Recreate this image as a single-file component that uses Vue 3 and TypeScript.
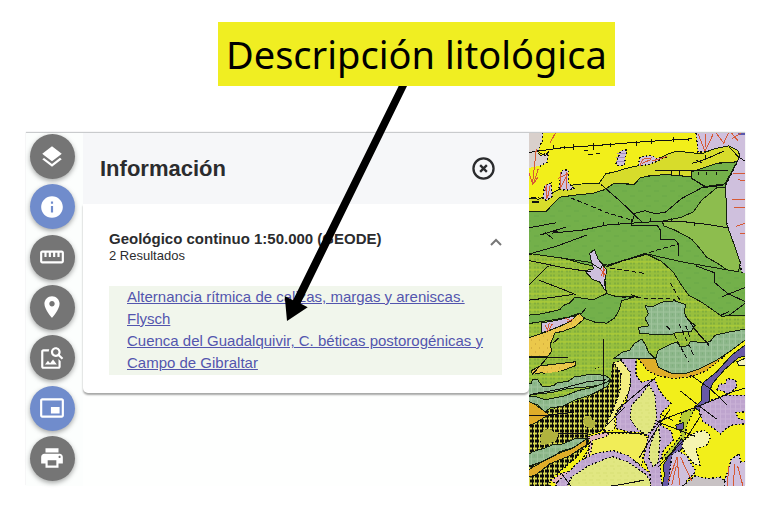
<script setup lang="ts">
import { ref } from 'vue'

interface Tool {
  id: string
  label: string
  path: string
}

const tools: Tool[] = [
  { id: 'layers', label: 'Capas', path: 'M11.99 18.54l-7.37-5.73L3 14.07l9 7 9-7-1.63-1.27-7.38 5.74zM12 16l7.36-5.73L21 9l-9-7-9 7 1.63 1.27L12 16z' },
  { id: 'info', label: 'Información', path: 'M12 2C6.48 2 2 6.48 2 12s4.48 10 10 10 10-4.48 10-10S17.52 2 12 2zm1 15h-2v-6h2v6zm0-8h-2V7h2v2z' },
  { id: 'measure', label: 'Medir', path: 'M21 6H3c-1.1 0-2 .9-2 2v8c0 1.1.9 2 2 2h18c1.1 0 2-.9 2-2V8c0-1.1-.9-2-2-2zm0 10H3V8h2v4h2V8h2v4h2V8h2v4h2V8h2v4h2V8h2v8z' },
  { id: 'place', label: 'Localizar', path: 'M12 2C8.13 2 5 5.13 5 9c0 5.25 7 13 7 13s7-7.75 7-13c0-3.87-3.13-7-7-7zm0 9.5c-1.38 0-2.5-1.12-2.5-2.5s1.12-2.5 2.5-2.5 2.5 1.12 2.5 2.5-1.12 2.5-2.5 2.5z' },
  { id: 'search', label: 'Buscar imagen', path: 'M18 13v7H4V6h5.02c.05-.71.22-1.38.48-2H4c-1.1 0-2 .9-2 2v14c0 1.1.9 2 2 2h14c1.1 0 2-.9 2-2v-5l-2-2zm-1.5 5h-11l2.75-3.53 1.96 2.36 2.75-3.54L16.5 18zm2.8-9.11c.44-.7.7-1.51.7-2.39C20 4.01 17.99 2 15.5 2S11 4.01 11 6.5s2.01 4.5 4.49 4.5c.88 0 1.7-.26 2.39-.7L21 13.42 22.42 12 19.3 8.89zM15.5 9C14.12 9 13 7.88 13 6.5S14.12 4 15.5 4 18 5.12 18 6.5 16.88 9 15.5 9z' },
  { id: 'overview', label: 'Vista general', path: 'M19 11h-8v6h8v-6zm4 8V4.98C23 3.88 22.1 3 21 3H3c-1.1 0-2 .88-2 1.98V19c0 1.1.9 2 2 2h18c1.1 0 2-.9 2-2zm-2 .02H3V4.97h18v14.05z' },
  { id: 'print', label: 'Imprimir', path: 'M19 8H5c-1.66 0-3 1.34-3 3v6h4v4h12v-4h4v-6c0-1.66-1.34-3-3-3zm-3 11H8v-5h8v5zm3-7c-.55 0-1-.45-1-1s.45-1 1-1 1 .45 1 1-.45 1-1 1zm-1-9H6v4h12V3z' },
]

const active = ref<string[]>(['info', 'overview'])
const panelOpen = ref(true)
const expanded = ref(true)

function toggle(id: string): void {
  active.value = active.value.includes(id)
    ? active.value.filter((item) => item !== id)
    : [...active.value, id]
  if (id === 'info') panelOpen.value = active.value.includes('info')
}

function closePanel(): void {
  panelOpen.value = false
  active.value = active.value.filter((item) => item !== 'info')
}

const results: string[] = [
  'Alternancia rítmica de calizas, margas y areniscas. Flysch',
  'Cuenca del Guadalquivir, C. béticas postorogénicas y Campo de Gibraltar',
]
</script>

<template>
  <div class="page">
    <p class="callout">Descripción litológica</p>

    <main class="viewer">
      <nav class="rail" aria-label="Herramientas">
        <button
          v-for="tool in tools"
          :key="tool.id"
          type="button"
          class="tool"
          :class="{ active: active.includes(tool.id) }"
          :aria-label="tool.label"
          :aria-pressed="active.includes(tool.id)"
          @click="toggle(tool.id)"
        >
          <svg viewBox="0 0 24 24" aria-hidden="true"><path :d="tool.path" /></svg>
        </button>
      </nav>

      <section class="panel">
        <template v-if="panelOpen">
          <header class="panel-head">
            <h1>Información</h1>
            <button type="button" class="icon-button" aria-label="Cerrar" @click="closePanel">
              <svg class="close-icon" viewBox="0 0 24 24" aria-hidden="true">
                <circle cx="12" cy="12" r="10.5" />
                <path d="M8.5 8.5l7 7M15.5 8.5l-7 7" />
              </svg>
            </button>
          </header>
          <div class="card">
            <div class="card-head">
              <div>
                <h2>Geológico continuo 1:50.000 (GEODE)</h2>
                <p class="count">2 Resultados</p>
              </div>
              <button
                type="button"
                class="icon-button chevron"
                aria-label="Contraer"
                :aria-expanded="expanded"
                @click="expanded = !expanded"
              >
                <svg viewBox="0 0 12 8" aria-hidden="true"><path d="M1 7l5-5 5 5" /></svg>
              </button>
            </div>
            <ul v-if="expanded" class="results">
              <li v-for="item in results" :key="item"><a href="#">{{ item }}</a></li>
            </ul>
          </div>
        </template>
      </section>

      <div class="map">
        <svg viewBox="0 0 648 1062" preserveAspectRatio="xMidYMid slice" role="img" aria-label="Mapa geológico">
          <defs>
            <pattern id="forest" width="48" height="30" patternUnits="userSpaceOnUse">
              <rect width="48" height="30" fill="#73b04a" />
              <path d="M4 8h14M28 23h14" stroke="#69a748" stroke-width="3" />
            </pattern>
            <pattern id="lime" width="24" height="24" patternUnits="userSpaceOnUse">
              <rect width="24" height="24" fill="#98bf3d" />
              <path d="M6 4v6M15 4v6M6 14v6M15 14v6" stroke="#82ae3c" stroke-width="5" />
              <path d="M0 1h24" stroke="#b4d034" stroke-width="3" />
            </pattern>
            <pattern id="sage" width="18" height="18" patternUnits="userSpaceOnUse">
              <rect width="18" height="18" fill="#8cb68a" />
              <path d="M0 2h18M2 0v18" stroke="#9fc49c" stroke-width="3" />
              <path d="M8 7h5v6h-5z" fill="#7faf7c" />
            </pattern>
            <pattern id="brick" width="15" height="15" patternUnits="userSpaceOnUse">
              <rect width="15" height="15" fill="#d8d850" />
              <path d="M0 3h12v8H0z" fill="#0b0b0b" />
              <path d="M6 0v15" stroke="#0b0b0b" stroke-width="3" />
            </pattern>
            <pattern id="mauve" width="15" height="15" patternUnits="userSpaceOnUse">
              <rect width="15" height="15" fill="#bea4ce" />
              <path d="M1 0v15M0 1h15" stroke="#c9b1d6" stroke-width="2" />
            </pattern>
            <pattern id="pale" width="21" height="21" patternUnits="userSpaceOnUse">
              <rect width="21" height="21" fill="#e1e782" />
              <path d="M3 3h12M12 13h6" stroke="#d6de73" stroke-width="3" />
            </pattern>
            <pattern id="gold" width="24" height="24" patternUnits="userSpaceOnUse">
              <rect width="24" height="24" fill="#ebc84b" />
              <path d="M5 7h3M17 18h3" stroke="#c29a35" stroke-width="3" />
            </pattern>
          </defs>

          <rect width="648" height="1062" fill="#f2ef1a" />

          <!-- Middle slopes -->
          <g transform="translate(-12 339)">
            <path fill="url(#forest)" d="M12-120H660V230H12z" />
            <path fill="url(#lime)" class="edge" d="M-5 22L60 28 130 42 185 58 250 62 310 40 365 26 410 48 445 80 470 120 492 150 530 170 590 212 670 208 V300L560 372 380 400 190 500H-5z" />
            <path fill="url(#forest)" class="edge" d="M0 210L50 205 80 198 105 192 115 180 135 172 150 155 205 163 245 144 270 152 330 154 290 166 282 195 268 218 245 233 210 230 180 219 160 204 130 215 90 222 0 236z" />
            <path class="edge lilac" d="M205 70l-5-30-5-15 14-12 12 30 14 18 10 12-6 35 2 28-16-26-22-8-24-26z" />
            <path fill="url(#gold)" class="edge" d="M0 280L50 264 95 246 130 220 165 204 178 220 150 244 112 258 90 262 76 296 80 318 68 333H0z" />
            <path class="edge lilac" d="M50 232l38-6 42-10 25-6-20 18-34 16-50 18z" />
            <path fill="url(#sage)" class="edge" d="M361 181L385 183 410 170 450 166 482 177 478 200 486 218 510 240 498 259 455 260 440 268 380 266 345 264 340 246 372 241 360 220 370 205z" />
            <path fill="url(#gold)" class="edge" d="M20 375l26-14 104-12v12l-42 16-40 12-16-8-30 6z" />
          </g>

          <!-- Southern basin -->
          <g transform="translate(-12 -12)">
            <path fill="#f2ef1a" d="M335 692L392 690 460 737 520 725 670 622V1090H370L330 900z" />
            <path fill="url(#brick)" class="dots" d="M0 850L60 850 120 830 200 790 205 722 265 705 288 725 285 790 270 840 235 905 190 920 192 945 150 990 75 1055V1090H0z" />
            <path fill="url(#lime)" d="M0 740L60 735 150 722 205 722 262 705 255 770 200 800 120 830 60 845 0 820z" />
            <path fill="url(#sage)" class="edge" d="M0 768L18 765 24 752 38 754 52 774 88 772 92 764 130 758 150 744 175 742 188 738 240 740 256 752 240 766 200 774 130 780 80 792 40 796 0 802z" />
            <path fill="url(#sage)" class="edge" d="M0 806L32 804 60 814 120 802 160 786 205 776 256 757 246 774 200 798 150 814 110 834 76 838 60 850 38 828 0 822z" />
            <path fill="#dfad29" class="edge" d="M0 812l30 16 42 30-42 26-30 12z" />
            <path fill="#b1b33e" d="M45 930l10-26 20-2 12 10 16-2-10 26-18 8-26 6zM174 880l6-16 15-4 7 14 14 8-14 18-20-6z" />
            <path fill="url(#sage)" class="edge" d="M0 985l24-16 34-10 30-12 18 2 48-20 30 2-30 24-48 14-34 24-72 24z" />
            <path fill="#dfad29" class="edge" d="M0 1030l55-32 47-24 40-14 42-28 2 16-52 34-60 24-40 32-34 12z" />
            <path fill="#f3ee80" class="dots" d="M265 702L300 695 318 740 312 790 290 830 270 860 268 905 235 908 262 850 285 790 288 735z" />
            <path fill="url(#mauve)" class="dots" d="M285 690L333 690 333 740 350 762 388 750 405 790 437 825 405 860 410 890 370 925 350 912 310 910 272 900 275 855 300 825 318 770 315 730z" />
            <path fill="url(#pale)" class="dots" d="M372 768L390 800 395 870 385 900 365 920 335 900 315 870 320 830 350 798z" />
            <path fill="#f1ed57" class="dots" d="M195 930L240 914 350 914 370 930 355 980 350 1010 310 990 260 970 200 985 160 1012 190 965z" />
            <path fill="#e4b5bd" class="dots" d="M78 1056l30-20 56-20 26-42 6-36-8-14 62-14-2 12-46 14-4 34-26 44-62 36-18 16z" />
            <path fill="url(#mauve)" class="dots" d="M98 1060L130 1030 160 1000 210 975 265 966 310 982 375 1035 385 1090H85z" />
            <path fill="url(#pale)" class="dots" d="M120 1090L140 1044 190 1012 260 984 310 1000 365 1040 378 1060 378 1090z" />
            <path fill="url(#mauve)" class="dots" d="M370 925L385 900 400 885 440 910 445 935 415 965 405 1000 412 1090 378 1090 375 1035 355 990z" />
            <path fill="url(#pale)" class="dots" d="M375 950L400 890 405 930 400 1000 385 1015 372 990z" />
            <path fill="#dfad29" class="dots" d="M340 690L365 724 395 740 440 750 500 745 545 726 600 682 520 722 460 735 392 690z" />
            <path fill="url(#sage)" class="edge" d="M268 689L292 671 314 665 328 645 350 632 362 649 370 671 392 691z" />
            <path fill="url(#sage)" class="edge" d="M392 690L400 665 440 645 456 642 465 654 490 652 496 638 530 642 555 640 570 620 610 611 670 600V628L610 672 570 698 520 722 480 736 440 735 400 716z" />
            <path fill="#b6cc35" class="dots" d="M510 840L470 852 462 895 470 920 440 955 408 992 440 985 480 930 485 890z" />
            <path fill="#6859a6" class="edge" d="M670 642L620 680 575 730 535 762 528 780 528 818 508 836 520 846 552 828 552 790 565 762 600 722 640 688 670 680zM452 890l24-8-2 20-18 2zM470 930L430 985 415 1010 418 1040 408 1090 430 1090 440 1000 478 950z" />
            <path fill="url(#mauve)" class="dots" d="M530 830L570 810 600 800 670 800V850L632 852 640 870 670 875V885L620 890 604 900 586 916 560 895 535 880 522 850zM575 784L582 768 600 765 608 750 632 756 636 775 610 797 592 788z" />
            <path fill="#f5f4b0" class="dots" d="M478 935L510 912 540 905 557 925 545 950 512 962 520 985 526 1010 508 1008 478 970 470 950z" />
            <path fill="#f4f3ba" class="edge" d="M636 700L670 685V712L640 710z" />
            <path class="lilac dots" d="M428 1090L440 980 460 967 484 982 510 1024 506 1038 484 1056 474 1090zM592 1090L600 1050 612 1020 618 992 642 976 648 1000 670 998V1090z" />
            <path fill="#c8c2c4" class="dots" d="M474 1072L510 1042 546 1050 586 1046 600 1058 594 1090H476z" />
          </g>
          <g transform="translate(-12 699)">
            <path class="line" d="M12 149h50M20 86l80-14 90-24 54-5M274 135L392 36M240 185l60-60M234 200h60l56 6M342 278l58-96 36-52M395 170l50-20 65-24 65-26 50-22 50-14M405 145l38 20M400 170l110 42M466 76l60 48 48 36M496 28l60 42 50 48M530 146l-42 66-48 50-40 42M110 325l30 40M256 362l50-8 50-10M62 150l84-10M100 203h90" />
            <path class="fault" d="M430 350l26-76 8 84M466 274l34 72M454 300l-14 60M606 362l6-60M624 362l6-65M638 302l16 60" />
          </g>
          <g transform="translate(-12 339)">
            <path class="line" d="M12 28l82-26M12 45l105 22 80 12M12 118l52-52 8-5M42 104l70 27 42 17M12 164l82-10 50-7M12 335h118M70 333l-48 54M240 105l4 39M235 280v150M250 58l110-30 95-40M318 148l30 9M500 240l52 60M480 210l48 65 25 22M460 8l14 27 44-7M510 28l5 34 54 20 1 30 38 32 52 24M590 154l70-28M520 0l28 36M586 210l26-12M668 168l-60 45M184 186l-16 20M85 292l18-16" />
            <path class="dash" d="M255 68l105 16M365 20l87-18M436 112l30 54M425 242l16 16M448 267l42 82M462 235l45 96M482 240l14 40M290 155l160 6" />
            <path class="fault" d="M65 260l8-27M70 257l-10-18M70 257l12-22M120 218l22 10M125 230l20-10M208 43l9 22M214 50l-8 10M225 70l16 18M228 90l12-20M234 65v30" />
          </g>

          <!-- Northern ridge -->
          <g transform="translate(-12 -12)">
            <path fill="#d9d0cc" class="dots" d="M0 0h54l-2 36-14 34 8 13 24-12-4 30-21 12-10 58-35 16z" />
            <path class="lilac dots" d="M512 0H675V432h-24l-8-30-12-28-14-40-11-48-6-110 37-77 5-24-28-20-40 10-55 7z" />
            <path fill="url(#forest)" class="edge" d="M0 249L60 250 80 230 104 206 150 200 205 194 237 184 265 164 300 166 326 169 346 148 370 143 420 138 500 145 540 130 570 106 636 100 600 173 606 290 630 375 606 424 470 400 360 375 250 410 120 390 0 373z" stroke="none" />
            <path fill="#d7dc2b" class="edge" d="M0 208L40 212 100 184 150 168 190 165 222 165 242 136 270 130 310 118 350 110 400 92 430 76 455 68 530 76 570 60 612 52 638 65 645 82 636 100 576 104 545 124 500 145 425 138 372 142 346 148 326 169 300 164 268 164 237 184 205 194 150 200 104 206 62 250H0z" />
            <path fill="#f2ef1a" d="M0 120l45-8 10 60-7 30-48 10z" />
            <path fill="#8dbd4e" class="edge" d="M412 278L470 266 505 250 530 215 575 178 602 178 606 290 628 350 646 402 640 430 606 424 580 406 545 386 523 358 500 332 452 306 416 292z" />
            <path fill="#75b14a" class="edge" d="M500 130l74-25 62-5-36 66-58 8-42-24z" />
            <path class="lilac dots" d="M54 210l4-38 20-8 4 40-18 12zM102 180l8-54 20-2 0 38 16 18-24 6zM273 105l14-38 18-3-7 46-18 2zM340 112l5-26 32-6 18 10 30-5-26 12-30 12z" />
            <path class="lilac edge" d="M200 405l-6-30 14-12 12 30 14 16-8 12z" />
            <path fill="#5b58ad" d="M636 12h30v8h-24z" />
            <path class="line" d="M12 72L110 58 240 49 350 40 500 31M42 72l20 10 8-14M190 65h-14M145 46v17M205 42v22M255 42v12M335 36v16M380 32v14M446 24v16M490 27v10M85 50v12M119 52v10M390 125h220M440 128v10M462 128v10M520 130v8M545 130v8M575 130v8M500 128v20l40 28M500 105l40-12 58-26M512 94l18 8M540 78v12M612 55l28 30 20 13M228 168l60 52 64 62M320 282l10-28 30-7 30 8 30-3 50-42 60-32 65-8M80 314L170 305 250 289 320 284 410 278 480 280 550 288 608 298M12 298l80-15M44 320l78-24M60 312l24 18M80 308l28 4M25 373l70-20 92-34M320 270v20h76l10 14v28h42l12 14v36M235 280v12M280 280v10M375 268v10M440 268v12M508 280v12M250 409l110-30" />
            <path class="dash" d="M137 208l110 45 75 22M372 372l40-12 50-14M18 206h24M190 78l40-4" />
            <path class="fault" d="M92 12L76 42M34 60L22 170M12 135l12 32 16-22M40 120l-14 45M60 175l8 32 8-38M63 210V165M105 180l25-48M108 175l-2-45M124 180V130M100 150l28-14M345 112l8-20 28-4M350 105l28-12M380 98l46-14M520 18l20 50 24-50M540 55V15M574 14l22 30 14-30M620 14l20 24M650 12l-28 18M625 136h35M640 154l20 2M622 214h38M626 238h34M632 294l28-10M645 314h15" />
            <path class="hatch" d="M275 74h27M274 86h27M274 98h26" />
            <path d="M20 220h22" stroke="#111" stroke-width="6" />
          </g>
        </svg>
      </div>
    </main>

    <svg class="pointer" viewBox="0 0 130 238" aria-hidden="true">
      <path d="M118.700 2L127 2 20.500 219.500 27.700 223.300 7 237 4.700 212 13 216.200z" />
    </svg>
  </div>
</template>

<style>
body {
  margin: 0;
  background: #fff;
}
</style>

<style scoped>
.page {
  position: relative;
  display: flex;
  flex-direction: column;
  box-sizing: border-box;
  min-height: 100vh;
  padding: 22px 21px 20px 26px;
  font-family: "Liberation Sans", Arial, sans-serif;
  color: #2b2c2e;
}

h1,
h2,
p,
ul {
  margin: 0;
  padding: 0;
}

.callout {
  align-self: flex-start;
  margin: 0 0 47px 192px;
  padding: 1px 8px 0;
  background: #f0ee22;
  color: #000;
  font-family: "Noto Sans", "Open Sans", sans-serif;
  font-size: 38px;
  line-height: 63px;
  white-space: nowrap;
}

.pointer {
  position: absolute;
  top: 84px;
  left: 280px;
  width: 130px;
  height: 238px;
  pointer-events: none;
}

.viewer {
  display: grid;
  flex: 1;
  grid-template-columns: 57px minmax(0, 446fr) minmax(0, 216fr);
  box-shadow: 0 -1px 1px #c9cbcd;
}

.rail {
  display: flex;
  flex-direction: column;
  align-items: center;
  justify-content: space-between;
  padding: 1px 5px 5px 0;
  background: #fcfefd;
}

.tool {
  display: grid;
  place-items: center;
  width: 45px;
  height: 45px;
  padding: 0;
  border: 0;
  border-radius: 50%;
  background: #757575;
  box-shadow: 0 2px 5px rgba(0, 0, 0, 0.35);
  cursor: pointer;
}

.tool.active {
  background: #708ccc;
}

.tool svg {
  width: 26px;
  height: 26px;
  fill: #fff;
}

.panel {
  background: #fefffe;
}

.panel-head {
  display: flex;
  align-items: center;
  justify-content: space-between;
  height: 71px;
  padding: 0 34px 0 17px;
  background: #f6f7f9;
}

h1 {
  font-size: 22px;
  font-weight: 700;
  line-height: 28px;
}

.icon-button {
  display: grid;
  place-items: center;
  padding: 0;
  border: 0;
  background: none;
  cursor: pointer;
}

.icon-button svg {
  fill: none;
  stroke: #2b2c2e;
}

.close-icon {
  width: 23px;
  height: 23px;
  stroke-width: 2.400;
}

.icon-button.chevron svg {
  width: 12px;
  height: 8px;
  stroke: #777;
  stroke-width: 2;
}

.card {
  padding: 26px 27px 18px 26px;
  border-radius: 0 0 5px 5px;
  background: #fff;
  box-shadow: 0 2px 2px rgba(0, 0, 0, 0.35);
}

.card-head {
  display: flex;
  align-items: flex-start;
  justify-content: space-between;
  height: 34px;
  margin-bottom: 22px;
}

.chevron {
  width: 12px;
  height: 24px;
}

h2 {
  font-size: 15px;
  font-weight: 700;
  line-height: 18px;
}

.count {
  font-size: 13px;
  line-height: 16px;
}

.results {
  padding: 0 0 1px 18px;
  background: #f1f6ec;
  font-size: 15px;
  line-height: 22px;
  list-style: none;
}

.results a {
  color: #5355ae;
}

.map {
  position: relative;
  overflow: hidden;
}

.map svg {
  position: absolute;
  width: 100%;
  height: 100%;
  fill: none;
  shape-rendering: crispEdges;
}

.edge {
  stroke: #15200f;
  stroke-width: 3;
}

.dots {
  stroke: #111;
  stroke-width: 4;
  stroke-dasharray: 5 6;
}

.lilac {
  fill: #cfc0dd;
}

.line {
  stroke: #111;
  stroke-width: 3;
}

.dash {
  stroke: #111;
  stroke-width: 3;
  stroke-dasharray: 14 8;
}

.fault {
  stroke: #d65a35;
  stroke-width: 3;
}

.hatch {
  stroke: #a68dbd;
  stroke-width: 4;
}
</style>
